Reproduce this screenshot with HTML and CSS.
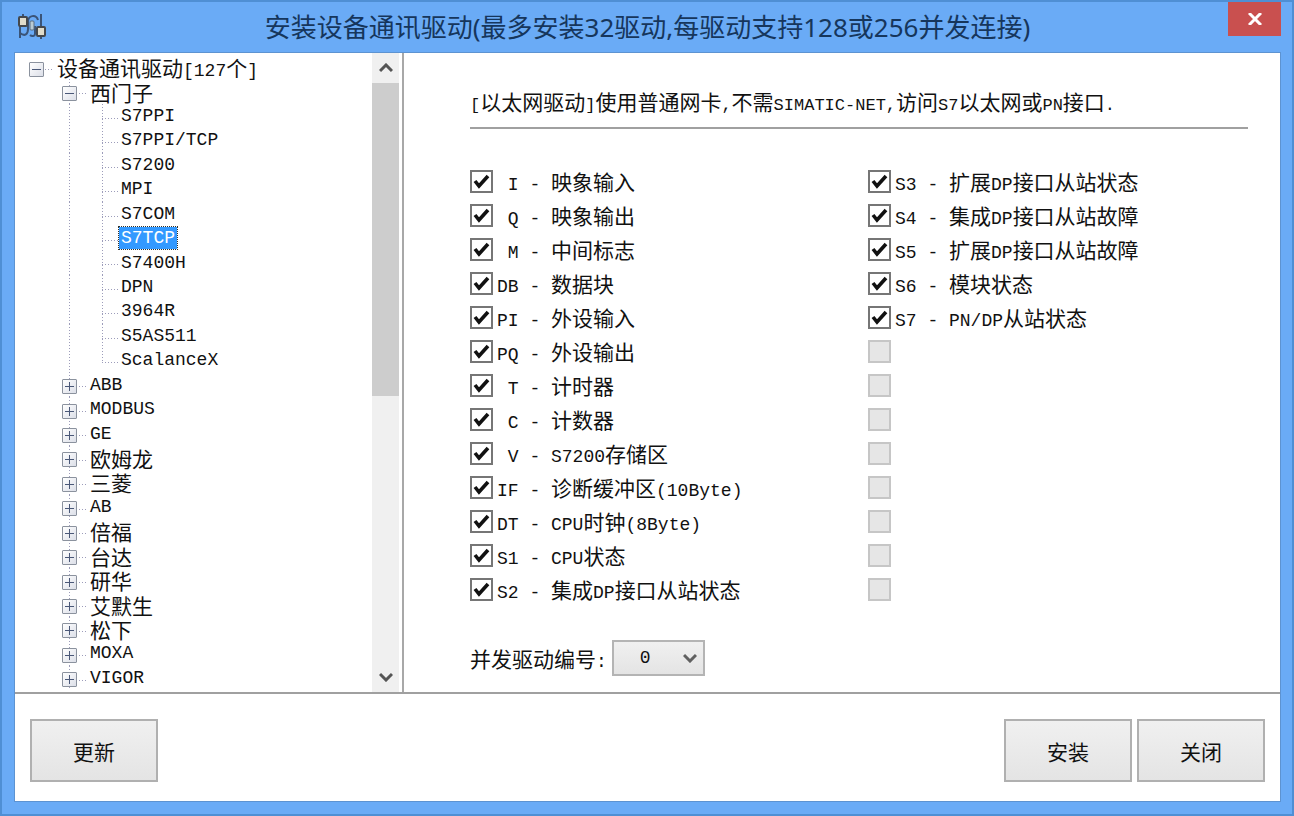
FILE: index.html
```html
<!DOCTYPE html>
<html lang="zh-CN">
<head>
<meta charset="utf-8">
<title>安装设备通讯驱动</title>
<link rel="stylesheet" href="styles.css">
</head>
<body>
<div class="window">
  <header class="titlebar">
    <svg class="app-icon" viewBox="0 0 30 28" aria-hidden="true">
      <path d="M6 1v4M3 12v13M3 20c5 4 8 1 8-4V9c0-7 8-8 10-2M18 13v8c0 2-3 3-5 1M24 1v14M24 22v4" fill="none" stroke="#3a5478" stroke-width="2"/>
      <rect x="2" y="4" width="8" height="9" rx="1" fill="#e0dccb" stroke="#45484c" stroke-width="2"/>
      <rect x="20" y="14" width="8" height="9" rx="1" fill="#e0dccb" stroke="#45484c" stroke-width="2"/>
      <rect x="13" y="8" width="4" height="9" rx="1" fill="#b9cbd4" stroke="#5a6d80"/>
    </svg>
    <h1 class="title">安装设备通讯驱动(最多安装32驱动,每驱动支持128或256并发连接)</h1>
    <button class="close" type="button" aria-label="关闭窗口">
      <svg viewBox="0 0 14 12" aria-hidden="true"><path d="M1 0l12 12M13 0L1 12" stroke="#fff" stroke-width="3"/></svg>
    </button>
  </header>
  <main class="client">
    <div class="panes">
      <nav class="sidebar">
        <ul class="tree">
          <li class="root"><button class="toggle open" type="button" aria-label="折叠"></button><span class="label">设备通讯驱动<span class="latin">[127</span>个<span class="latin">]</span></span></li>
          <li class="group"><button class="toggle open" type="button" aria-label="折叠"></button><span class="label">西门子</span></li>
          <li class="leaf"><span class="label latin">S7PPI</span></li>
          <li class="leaf"><span class="label latin">S7PPI/TCP</span></li>
          <li class="leaf"><span class="label latin">S7200</span></li>
          <li class="leaf"><span class="label latin">MPI</span></li>
          <li class="leaf"><span class="label latin">S7COM</span></li>
          <li class="leaf"><span class="label latin selected">S7TCP</span></li>
          <li class="leaf"><span class="label latin">S7400H</span></li>
          <li class="leaf"><span class="label latin">DPN</span></li>
          <li class="leaf"><span class="label latin">3964R</span></li>
          <li class="leaf"><span class="label latin">S5AS511</span></li>
          <li class="leaf last"><span class="label latin">ScalanceX</span></li>
          <li class="group"><button class="toggle" type="button" aria-label="展开"></button><span class="label latin">ABB</span></li>
          <li class="group"><button class="toggle" type="button" aria-label="展开"></button><span class="label latin">MODBUS</span></li>
          <li class="group"><button class="toggle" type="button" aria-label="展开"></button><span class="label latin">GE</span></li>
          <li class="group"><button class="toggle" type="button" aria-label="展开"></button><span class="label">欧姆龙</span></li>
          <li class="group"><button class="toggle" type="button" aria-label="展开"></button><span class="label">三菱</span></li>
          <li class="group"><button class="toggle" type="button" aria-label="展开"></button><span class="label latin">AB</span></li>
          <li class="group"><button class="toggle" type="button" aria-label="展开"></button><span class="label">倍福</span></li>
          <li class="group"><button class="toggle" type="button" aria-label="展开"></button><span class="label">台达</span></li>
          <li class="group"><button class="toggle" type="button" aria-label="展开"></button><span class="label">研华</span></li>
          <li class="group"><button class="toggle" type="button" aria-label="展开"></button><span class="label">艾默生</span></li>
          <li class="group"><button class="toggle" type="button" aria-label="展开"></button><span class="label">松下</span></li>
          <li class="group"><button class="toggle" type="button" aria-label="展开"></button><span class="label latin">MOXA</span></li>
          <li class="group"><button class="toggle" type="button" aria-label="展开"></button><span class="label latin">VIGOR</span></li>
        </ul>
        <div class="scrollbar">
          <button class="arrow" type="button" aria-label="向上滚动"><svg viewBox="0 0 14 10" aria-hidden="true"><path d="M1 8l6-6 6 6" fill="none" stroke="#555" stroke-width="3"/></svg></button>
          <div class="track"><div class="thumb"></div></div>
          <button class="arrow" type="button" aria-label="向下滚动"><svg viewBox="0 0 14 10" aria-hidden="true"><path d="M1 2l6 6 6-6" fill="none" stroke="#555" stroke-width="3"/></svg></button>
        </div>
      </nav>
      <section class="details">
        <p class="intro"><span class="latin">[</span>以太网驱动<span class="latin">]</span>使用普通网卡<span class="latin">,</span>不需<span class="latin">SIMATIC-NET,</span>访问<span class="latin">S7</span>以太网或<span class="latin">PN</span>接口<span class="latin">.</span></p>
        <div class="options">
          <div class="column">
            <label class="option"><input type="checkbox" checked><span><span class="latin"> I - </span>映象输入</span></label>
            <label class="option"><input type="checkbox" checked><span><span class="latin"> Q - </span>映象输出</span></label>
            <label class="option"><input type="checkbox" checked><span><span class="latin"> M - </span>中间标志</span></label>
            <label class="option"><input type="checkbox" checked><span><span class="latin">DB - </span>数据块</span></label>
            <label class="option"><input type="checkbox" checked><span><span class="latin">PI - </span>外设输入</span></label>
            <label class="option"><input type="checkbox" checked><span><span class="latin">PQ - </span>外设输出</span></label>
            <label class="option"><input type="checkbox" checked><span><span class="latin"> T - </span>计时器</span></label>
            <label class="option"><input type="checkbox" checked><span><span class="latin"> C - </span>计数器</span></label>
            <label class="option"><input type="checkbox" checked><span><span class="latin"> V - S7200</span>存储区</span></label>
            <label class="option"><input type="checkbox" checked><span><span class="latin">IF - </span>诊断缓冲区<span class="latin">(10Byte)</span></span></label>
            <label class="option"><input type="checkbox" checked><span><span class="latin">DT - CPU</span>时钟<span class="latin">(8Byte)</span></span></label>
            <label class="option"><input type="checkbox" checked><span><span class="latin">S1 - CPU</span>状态</span></label>
            <label class="option"><input type="checkbox" checked><span><span class="latin">S2 - </span>集成<span class="latin">DP</span>接口从站状态</span></label>
          </div>
          <div class="column">
            <label class="option"><input type="checkbox" checked><span><span class="latin">S3 - </span>扩展<span class="latin">DP</span>接口从站状态</span></label>
            <label class="option"><input type="checkbox" checked><span><span class="latin">S4 - </span>集成<span class="latin">DP</span>接口从站故障</span></label>
            <label class="option"><input type="checkbox" checked><span><span class="latin">S5 - </span>扩展<span class="latin">DP</span>接口从站故障</span></label>
            <label class="option"><input type="checkbox" checked><span><span class="latin">S6 - </span>模块状态</span></label>
            <label class="option"><input type="checkbox" checked><span><span class="latin">S7 - PN/DP</span>从站状态</span></label>
            <label class="option"><input type="checkbox" disabled aria-label="未使用"></label>
            <label class="option"><input type="checkbox" disabled aria-label="未使用"></label>
            <label class="option"><input type="checkbox" disabled aria-label="未使用"></label>
            <label class="option"><input type="checkbox" disabled aria-label="未使用"></label>
            <label class="option"><input type="checkbox" disabled aria-label="未使用"></label>
            <label class="option"><input type="checkbox" disabled aria-label="未使用"></label>
            <label class="option"><input type="checkbox" disabled aria-label="未使用"></label>
            <label class="option"><input type="checkbox" disabled aria-label="未使用"></label>
          </div>
        </div>
        <div class="instance">
          <label for="instance">并发驱动编号<span class="latin">:</span></label>
          <select id="instance" class="latin"><option>0</option><option>1</option><option>2</option><option>3</option></select>
        </div>
      </section>
    </div>
    <footer class="actions">
      <button class="push" type="button">更新</button>
      <div class="confirm">
        <button class="push" type="button">安装</button>
        <button class="push" type="button">关闭</button>
      </div>
    </footer>
  </main>
</div>
</body>
</html>
```

FILE: styles.css
```css
* {
  box-sizing: border-box;
}

body {
  margin: 0;
  color: #111;
  font-family: "Noto Sans CJK SC", sans-serif;
  font-size: 21px;
  line-height: 24px;
}

button,
select,
input {
  margin: 0;
  padding: 0;
  color: inherit;
  font: inherit;
}

.latin {
  font-family: "Liberation Mono", monospace;
  font-size: 18px;
  line-height: 16px;
  white-space: pre;
}

.window {
  display: flex;
  flex-direction: column;
  min-height: 100vh;
  padding: 0 11px 12px 12px;
  border: 2px solid #4f8fd4;
  background: #6aabf6;
}

/* Title bar */
.titlebar {
  display: grid;
  grid-template-columns: 53px 1fr 53px;
  align-items: center;
  height: 50px;
}

.app-icon {
  width: 30px;
  height: 28px;
  margin-left: 3px;
}

.title {
  margin: 0;
  color: #16365c;
  font-family: "Noto Sans", "Noto Sans CJK SC", sans-serif;
  font-size: 26px;
  font-weight: 400;
  line-height: 36px;
  text-align: center;
}

.close {
  display: grid;
  place-items: center;
  align-self: start;
  height: 34px;
  border: 0;
  background: #c9504f;
}

.close svg {
  width: 14px;
  height: 12px;
}

/* Client area */
.client {
  display: flex;
  flex: 1;
  flex-direction: column;
  border: 1px solid #5d93d1;
  background: #fff;
}

.panes {
  display: flex;
  flex: 1;
}

.sidebar {
  display: flex;
  flex: 0 0 389px;
  border-right: 2px solid #a8a8a8;
}

.tree {
  display: grid;
  flex: 1;
  grid-auto-rows: 1fr;
  margin: 0;
  padding: 2px 0;
  list-style: none;
}

.tree li {
  --dots: repeating-linear-gradient(#9c9cba 0 1px, transparent 1px 3px);
  --dashes: repeating-linear-gradient(90deg, #9c9cba 0 1px, transparent 1px 3px);
  display: flex;
  align-items: center;
  background-repeat: no-repeat;
}

.tree .root {
  padding-left: 14px;
  background-image: var(--dashes);
  background-position: 30px 14px;
  background-size: 7px 1px;
}

.tree .group {
  padding-left: 47px;
  background-image: var(--dots), var(--dashes);
  background-position: 54px 0, 64px 14px;
  background-size: 1px 100%, 7px 1px;
}

.tree .leaf {
  padding-left: 104px;
  background-image: var(--dots), var(--dots), var(--dashes);
  background-position: 54px 0, 87px 0, 87px 14px;
  background-size: 1px 100%, 1px 100%, 16px 1px;
}

.tree .last {
  background-size: 1px 100%, 1px 14px, 16px 1px;
}

.toggle {
  width: 15px;
  height: 15px;
  margin: 4px 11px 0 0;
  border: 1px solid #8b929e;
  border-radius: 1px;
  background:
    linear-gradient(#4a5878, #4a5878) center / 9px 1px no-repeat,
    linear-gradient(#4a5878, #4a5878) center / 1px 9px no-repeat,
    linear-gradient(135deg, #fff, #dcdfe8);
}

.toggle.open {
  background:
    linear-gradient(#4a5878, #4a5878) center / 9px 1px no-repeat,
    linear-gradient(135deg, #fff, #dcdfe8);
}

.label {
  padding: 0 2px;
  line-height: 22px;
}

.selected {
  outline: 1px dotted #30302a;
  background: #3399ff;
  color: #fff;
}

.scrollbar {
  display: flex;
  flex: 0 0 30px;
  flex-direction: column;
  padding-right: 3px;
}

.arrow {
  display: grid;
  place-items: center;
  height: 30px;
  border: 0;
  background: #f0f0f0;
}

.arrow svg {
  width: 14px;
  height: 10px;
}

.track {
  flex: 1;
  background: #f0f0f0;
}

.thumb {
  height: 54%;
  background: #cdcdcd;
}

/* Driver details */
.details {
  flex: 1;
  padding: 34px 32px 10px 66px;
}

.intro {
  margin: 0 0 35px;
  padding-bottom: 12px;
  border-bottom: 2px solid #a0a0a0;
  line-height: 28px;
}

.intro .latin {
  font-size: 17px;
}

.options {
  display: grid;
  grid-template-columns: 398px 1fr;
}

.column {
  display: grid;
  grid-auto-rows: 34px;
}

.option {
  display: flex;
  align-items: center;
  gap: 4px;
}

.option input {
  width: 23px;
  height: 23px;
  border: 2px solid #767676;
  appearance: none;
  background: #fff;
}

.option input:checked {
  background: #fff url("data:image/svg+xml,%3Csvg xmlns='http://www.w3.org/2000/svg' viewBox='0 0 19 19'%3E%3Cpath d='M3 9l4 5 9-10' fill='none' stroke='%23111' stroke-width='3.6'/%3E%3C/svg%3E") center / 19px 19px no-repeat;
}

.option input:disabled {
  border-color: #c6c6c6;
  background: #e6e6e6;
}

.instance {
  display: flex;
  align-items: center;
  gap: 5px;
  margin-top: 34px;
}

.instance select {
  width: 93px;
  height: 36px;
  padding-left: 26px;
  border: 2px solid #b4b4b4;
  border-radius: 0;
  appearance: none;
  background:
    url("data:image/svg+xml,%3Csvg xmlns='http://www.w3.org/2000/svg' viewBox='0 0 14 10'%3E%3Cpath d='M1 2l6 6 6-6' fill='none' stroke='%23606060' stroke-width='3'/%3E%3C/svg%3E") right 6px center / 14px 10px no-repeat,
    linear-gradient(#f0f0f0, #e4e4e4);
}

/* Action bar */
.actions {
  display: flex;
  justify-content: space-between;
  padding: 25px 15px 19px;
  border-top: 2px solid #a0a0a0;
}

.confirm {
  display: flex;
  gap: 5px;
}

.push {
  width: 128px;
  height: 63px;
  border: 2px solid #b0b0b0;
  background: linear-gradient(#f0f0f0, #e4e4e4);
}
```
